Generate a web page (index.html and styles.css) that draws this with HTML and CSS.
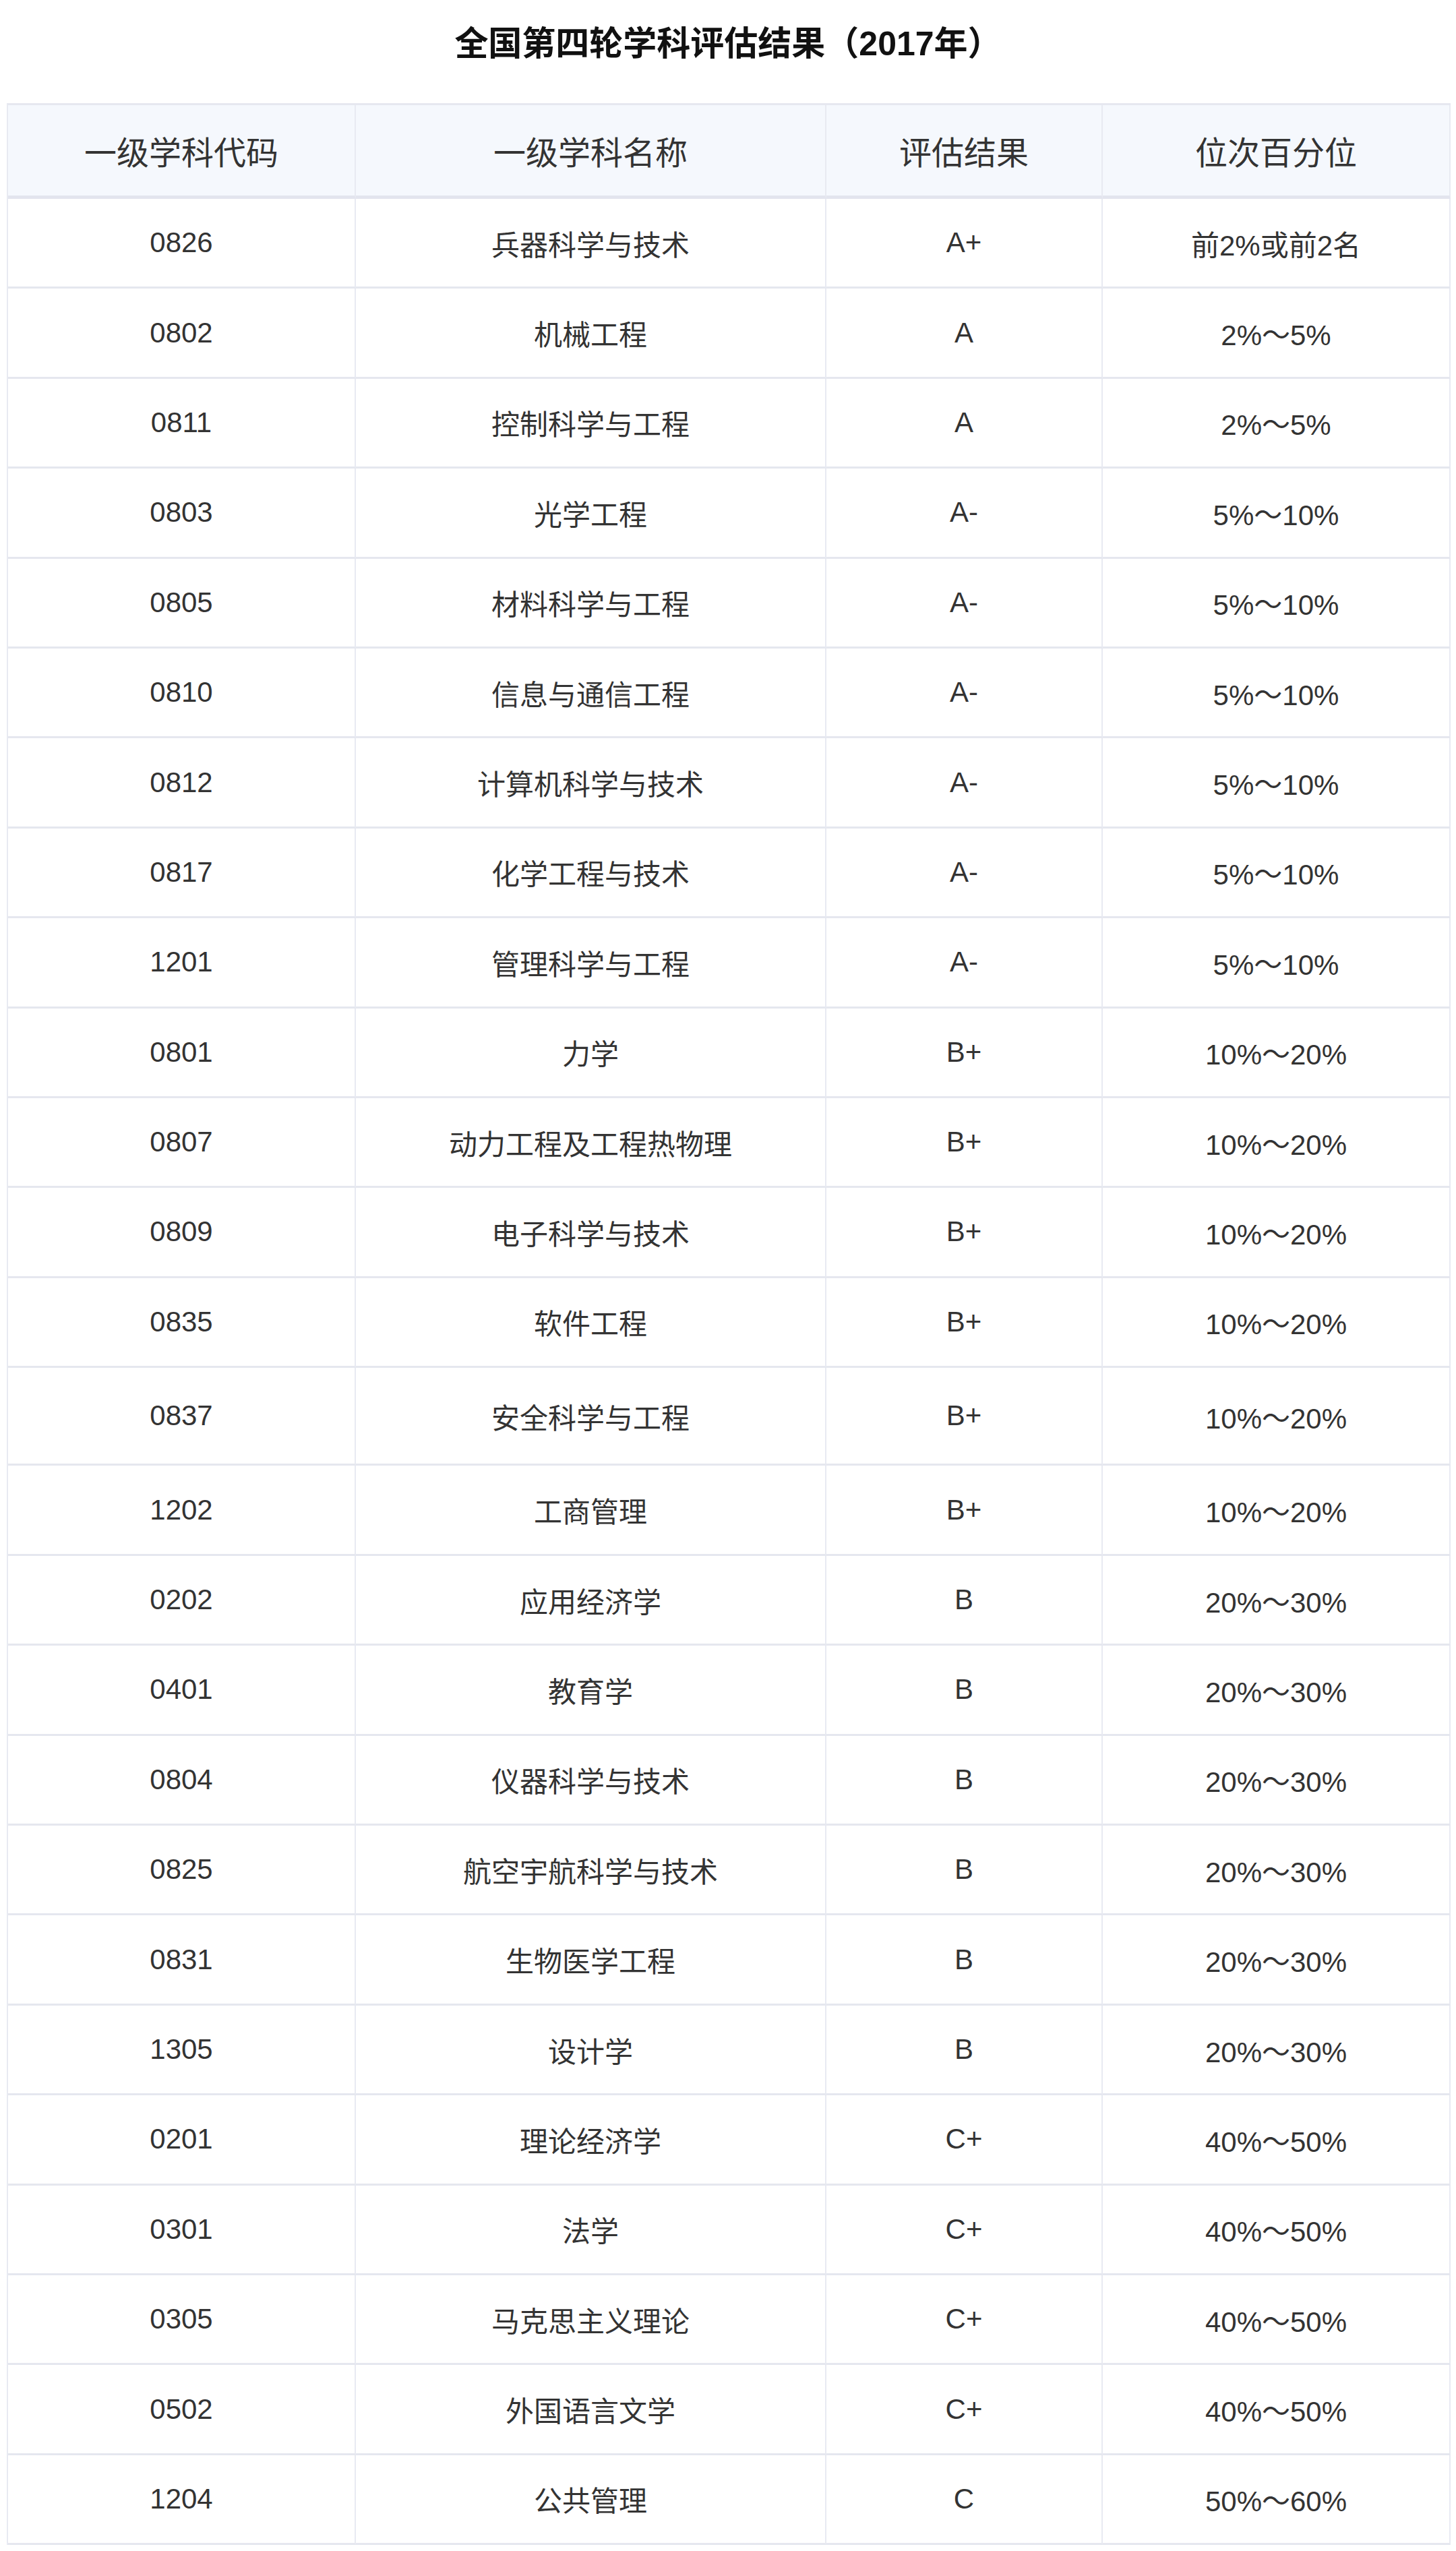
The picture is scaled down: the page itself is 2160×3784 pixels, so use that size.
FILE: index.html
```html
<!DOCTYPE html>
<html lang="zh-CN">
<head>
<meta charset="utf-8">
<title>全国第四轮学科评估结果（2017年）</title>
<link rel="stylesheet" href="styles.css">
</head>
<body>
<div class="page">
  <h1 class="title">全国第四轮学科评估结果（2017年）</h1>
  <table class="grid">
    <colgroup>
      <col class="c1"><col class="c2"><col class="c3"><col class="c4">
    </colgroup>
    <thead>
      <tr><th>一级学科代码</th><th>一级学科名称</th><th>评估结果</th><th>位次百分位</th></tr>
    </thead>
    <tbody>
      <tr><td>0826</td><td>兵器科学与技术</td><td>A+</td><td>前2%或前2名</td></tr>
      <tr><td>0802</td><td>机械工程</td><td>A</td><td>2%～5%</td></tr>
      <tr><td>0811</td><td>控制科学与工程</td><td>A</td><td>2%～5%</td></tr>
      <tr><td>0803</td><td>光学工程</td><td>A-</td><td>5%～10%</td></tr>
      <tr><td>0805</td><td>材料科学与工程</td><td>A-</td><td>5%～10%</td></tr>
      <tr><td>0810</td><td>信息与通信工程</td><td>A-</td><td>5%～10%</td></tr>
      <tr><td>0812</td><td>计算机科学与技术</td><td>A-</td><td>5%～10%</td></tr>
      <tr><td>0817</td><td>化学工程与技术</td><td>A-</td><td>5%～10%</td></tr>
      <tr><td>1201</td><td>管理科学与工程</td><td>A-</td><td>5%～10%</td></tr>
      <tr><td>0801</td><td>力学</td><td>B+</td><td>10%～20%</td></tr>
      <tr><td>0807</td><td>动力工程及工程热物理</td><td>B+</td><td>10%～20%</td></tr>
      <tr><td>0809</td><td>电子科学与技术</td><td>B+</td><td>10%～20%</td></tr>
      <tr><td>0835</td><td>软件工程</td><td>B+</td><td>10%～20%</td></tr>
      <tr class="tall"><td>0837</td><td>安全科学与工程</td><td>B+</td><td>10%～20%</td></tr>
      <tr><td>1202</td><td>工商管理</td><td>B+</td><td>10%～20%</td></tr>
      <tr><td>0202</td><td>应用经济学</td><td>B</td><td>20%～30%</td></tr>
      <tr><td>0401</td><td>教育学</td><td>B</td><td>20%～30%</td></tr>
      <tr><td>0804</td><td>仪器科学与技术</td><td>B</td><td>20%～30%</td></tr>
      <tr><td>0825</td><td>航空宇航科学与技术</td><td>B</td><td>20%～30%</td></tr>
      <tr><td>0831</td><td>生物医学工程</td><td>B</td><td>20%～30%</td></tr>
      <tr><td>1305</td><td>设计学</td><td>B</td><td>20%～30%</td></tr>
      <tr><td>0201</td><td>理论经济学</td><td>C+</td><td>40%～50%</td></tr>
      <tr><td>0301</td><td>法学</td><td>C+</td><td>40%～50%</td></tr>
      <tr><td>0305</td><td>马克思主义理论</td><td>C+</td><td>40%～50%</td></tr>
      <tr><td>0502</td><td>外国语言文学</td><td>C+</td><td>40%～50%</td></tr>
      <tr><td>1204</td><td>公共管理</td><td>C</td><td>50%～60%</td></tr>
    </tbody>
  </table>
</div>
</body>
</html>
```
FILE: styles.css
```css
html, body {
  margin: 0;
  padding: 0;
  background: #ffffff;
}

body {
  font-family: "Liberation Sans", "Noto Sans CJK SC", sans-serif;
  color: #333333;
}

.page {
  padding: 30px 0 0 10px;
}

.title {
  margin: 0 0 53px 0;
  width: 2140px;
  height: 70px;
  line-height: 70px;
  font-size: 50px;
  font-weight: bold;
  color: #111111;
  text-align: center;
}

.grid {
  width: 2140px;
  border-collapse: separate;
  border-spacing: 0;
  table-layout: fixed;
  border-top: 3px solid #e6e8f0;
  border-left: 2px solid #e8eaf2;
}

.c1 { width: 516px; }
.c2 { width: 698px; }
.c3 { width: 410px; }
.c4 { width: 516px; }

.grid th,
.grid td {
  padding: 0;
  text-align: center;
  vertical-align: middle;
  border-right: 2px solid #e8eaf2;
  border-bottom: 3px solid #e5e7ef;
}

.grid th {
  height: 134px;
  background: #f5f8fd;
  font-weight: normal;
  font-size: 48px;
  color: #333333;
  border-bottom: 5px solid #e3e5ee;
}

.grid td {
  height: 130.4px;
  font-size: 42px;
  color: #333333;
}

.grid tr.tall td {
  height: 142.4px;
}
```
